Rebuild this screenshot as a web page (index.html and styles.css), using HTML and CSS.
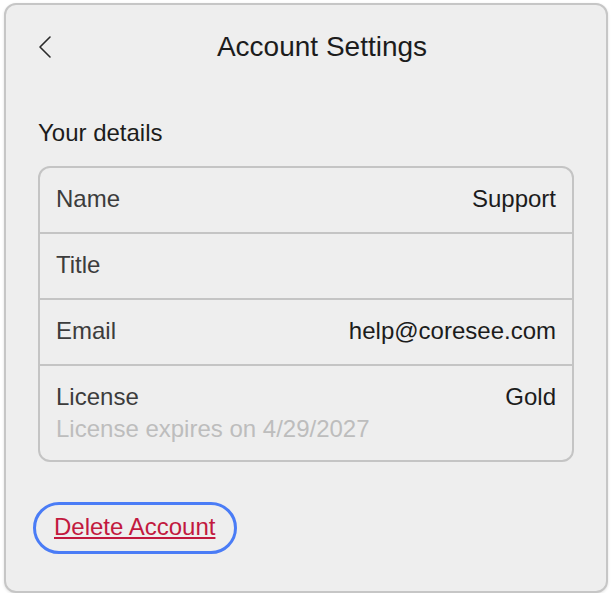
FILE: index.html
```html
<!DOCTYPE html>
<html lang="en">
<head>
<meta charset="utf-8">
<title>Account Settings</title>
<link rel="stylesheet" href="styles.css">
</head>
<body>
<div class="panel">
  <header class="header">
    <button class="back" aria-label="Back">
      <svg width="32" height="40" viewBox="0 0 32 40"><polyline points="22,10 12,20 22,30" fill="none" stroke="#2a2a2a" stroke-width="1.6" stroke-linecap="round" stroke-linejoin="round"/></svg>
    </button>
    <h1 class="title">Account Settings</h1>
  </header>
  <h2 class="section-title">Your details</h2>
  <div class="card">
    <div class="row">
      <span class="label">Name</span>
      <span class="value">Support</span>
    </div>
    <div class="row">
      <span class="label">Title</span>
      <span class="value"></span>
    </div>
    <div class="row">
      <span class="label">Email</span>
      <span class="value">help@coresee.com</span>
    </div>
    <div class="row row-stack">
      <div class="row-line">
        <span class="label">License</span>
        <span class="value">Gold</span>
      </div>
      <div class="sub">License expires on 4/29/2027</div>
    </div>
  </div>
  <div class="actions">
    <a class="delete" href="#">Delete Account</a>
  </div>
</div>
</body>
</html>
```
FILE: styles.css
```css
* { box-sizing: border-box; }
html, body { margin: 0; padding: 0; background: #ffffff; }
body {
  padding: 3px 0 0 4px;
  font-family: "Liberation Sans", Arial, Helvetica, sans-serif;
}
.panel {
  width: 604px;
  height: 590px;
  background: #eeeeee;
  border: 2px solid #c6c6c6;
  border-radius: 12px;
  padding: 22px 32px 0;
  box-shadow: 0 1px 3px rgba(0,0,0,0.12);
}
.header {
  display: flex;
  align-items: center;
  height: 40px;
  margin: 0 -10px;
}
.back {
  width: 32px;
  height: 40px;
  padding: 0;
  border: 0;
  background: none;
  display: block;
  flex: none;
}
.back svg { display: block; }
.title {
  flex: 1;
  margin: 0;
  text-align: center;
  font-size: 28px;
  font-weight: normal;
  line-height: 40px;
  color: #1c1c1c;
}
.section-title {
  margin: 50px 0 0;
  font-size: 24px;
  font-weight: normal;
  line-height: 32px;
  color: #1c1c1c;
}
.card {
  margin-top: 17px;
  border: 2px solid #c4c4c4;
  border-radius: 12px;
}
.row {
  display: flex;
  justify-content: space-between;
  padding: 15px 16px 17px;
  font-size: 24px;
  line-height: 32px;
}
.row + .row { border-top: 2px solid #c4c4c4; }
.row-stack { flex-direction: column; padding-bottom: 15px; }
.row-line { display: flex; justify-content: space-between; }
.label { color: #3c3c3c; }
.value { color: #1c1c1c; }
.sub { color: #bdbdbd; }
.actions {
  margin: 40px 0 0 -5px;
  display: flex;
}
.delete {
  display: inline-block;
  border: 3px solid #4a7cf6;
  border-radius: 28px;
  padding: 6px 19px 8px 18px;
  font-size: 24px;
  line-height: 32px;
  color: #c2193e;
  text-decoration: underline;
  text-underline-offset: 2px;
}
```
